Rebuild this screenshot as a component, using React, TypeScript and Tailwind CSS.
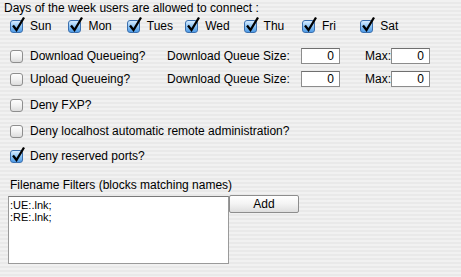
import React from 'react';

function Check({ checked }: { checked?: boolean }) {
  return (
    <span className="relative inline-block h-[13px] w-[13px] shrink-0">
      <span
        className={`absolute inset-0 rounded-[3px] border ${
          checked
            ? 'border-[#3b6fae] bg-gradient-to-b from-[#d7ecff] via-[#8cc4f5] to-[#4f9be6]'
            : 'border-[#8e8e8e] bg-gradient-to-b from-[#fdfdfd] via-[#f1f1f1] to-[#dcdcdc]'
        }`}
      />
      {checked && (
        <svg className="absolute left-[1px] top-[-4px]" width="15" height="16" viewBox="0 0 15 16">
          <path d="M2 9.5 L5.5 14 L13 1.5" fill="none" stroke="#000" strokeWidth="2.3" strokeLinejoin="miter" />
        </svg>
      )}
    </span>
  );
}

function NumBox({ value }: { value: string }) {
  return (
    <div className="h-[16px] w-[39px] border border-[#8c8c8c] border-t-[#6f6f6f] bg-white pr-[5px] text-right text-[12px] leading-[14px]">
      {value}
    </div>
  );
}

const days = ['Sun', 'Mon', 'Tues', 'Wed', 'Thu', 'Fri', 'Sat'];

export default function App() {
  return (
    <div
      className="h-[277px] w-[461px] overflow-hidden text-[12px] text-black"
      style={{
        fontFamily: '"Liberation Sans", Arial, sans-serif',
        backgroundImage: 'repeating-linear-gradient(to bottom, #f1f1f1 0px, #f1f1f1 2px, #e9e9e9 2px, #e9e9e9 4px)',
      }}
    >
      {/* Days */}
      <div className="h-[16px] pl-[4px] leading-[16px]">Days of the week users are allowed to connect :</div>
      <div className="flex h-[20px] items-center pl-[10px]">
        {days.map((d) => (
          <div key={d} className="flex w-[58.4px] shrink-0 items-center">
            <Check checked />
            <span className="ml-[7px]">{d}</span>
          </div>
        ))}
      </div>

      {/* Queueing */}
      <div className="mt-[9px] flex h-[22px] items-center pl-[10px]">
        <Check />
        <span className="ml-[7px] w-[137px]">Download Queueing?</span>
        <span className="w-[134px]">Download Queue Size:</span>
        <NumBox value="0" />
        <span className="ml-[25px] w-[26px]">Max:</span>
        <NumBox value="0" />
      </div>
      <div className="mt-[1px] flex h-[22px] items-center pl-[10px]">
        <Check />
        <span className="ml-[7px] w-[137px]">Upload Queueing?</span>
        <span className="w-[134px]">Download Queue Size:</span>
        <NumBox value="0" />
        <span className="ml-[25px] w-[26px]">Max:</span>
        <NumBox value="0" />
      </div>

      {/* Deny options */}
      <div className="mt-[4px] flex h-[22px] items-center pl-[10px]">
        <Check />
        <span className="ml-[7px]">Deny FXP?</span>
      </div>
      <div className="mt-[4px] flex h-[22px] items-center pl-[10px]">
        <Check />
        <span className="ml-[7px]">Deny localhost automatic remote administration?</span>
      </div>
      <div className="mt-[3px] flex h-[22px] items-center pl-[10px]">
        <Check checked />
        <span className="ml-[7px]">Deny reserved ports?</span>
      </div>

      {/* Filename filters */}
      <div className="mt-[10px] h-[16px] pl-[10px] leading-[16px]">Filename Filters (blocks matching names)</div>
      <div className="mt-[3px] flex items-start pl-[8px]">
        <div className="h-[68px] w-[221px] border border-[#9a9a9a] border-t-[#7a7a7a] bg-white pl-[1px] pt-[2px] text-[11px] leading-[12px]">
          <div>:UE:.lnk;</div>
          <div>:RE:.lnk;</div>
        </div>
        <button className="mt-[-1px] h-[18px] w-[70px] rounded-[2px] border border-[#8d8d8d] bg-gradient-to-b from-[#ffffff] via-[#f3f3f3] to-[#dedede] text-[12px] leading-[16px]">
          Add
        </button>
      </div>
    </div>
  );
}
